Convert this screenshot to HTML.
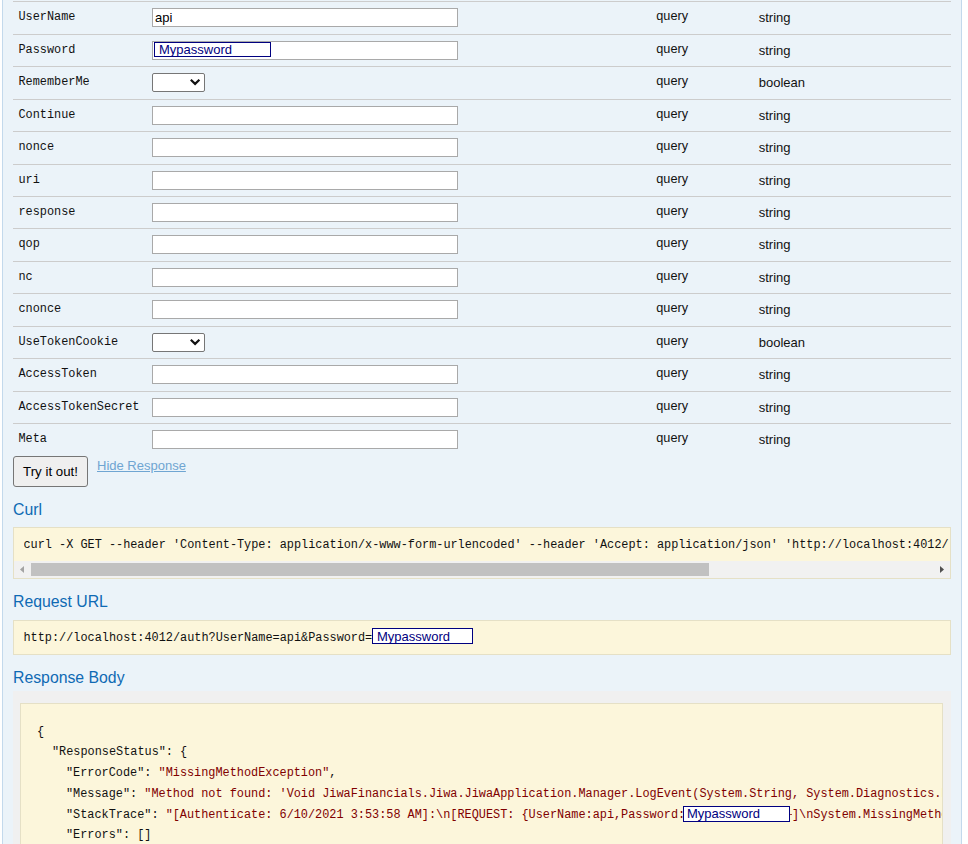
<!DOCTYPE html>
<html><head><meta charset="utf-8"><style>
html,body{margin:0;padding:0;}
body{width:968px;height:844px;overflow:hidden;background:#fff;position:relative;font-family:"Liberation Sans",sans-serif;}
#panel{position:absolute;left:2px;top:-2px;width:958px;height:860px;background:#ebf3f9;border:1px solid #c3d9ec;}
.ln{position:absolute;left:13px;width:938px;height:1px;background:#cccccc;}
.lab{position:absolute;left:18.5px;font:11.87px/14px "Liberation Mono",monospace;color:#111;white-space:pre;}
.inp{position:absolute;left:152px;width:304px;height:17px;border:1px solid #a9a9a9;background:#fff;}
.sel{position:absolute;left:152px;width:51px;height:17px;border:1px solid #767676;border-radius:2px;background:#fff;}
.q{position:absolute;left:656.3px;font-size:12.7px;line-height:15px;color:#111;}
.t{position:absolute;left:758.7px;font-size:13px;line-height:15px;color:#111;}
.h4{position:absolute;left:13px;font-size:15.8px;line-height:20px;color:#0f6ab4;}
.box{position:absolute;left:13px;width:936px;background:#fcf6db;border:1px solid #e5e0c6;}
.mono{position:absolute;font:11.87px/14px "Liberation Mono",monospace;color:#111;white-space:pre;}
.red{color:#800000;}
.pw{position:absolute;border:1px solid #000080;background:#fff;color:#000080;font-size:13px;line-height:14px;overflow:hidden;box-sizing:border-box;white-space:pre;}
</style></head><body>
<div id="panel"></div>

<div class="ln" style="top:1px"></div>
<div class="lab" style="top:10px">UserName</div>
<div class="inp" style="top:8px"></div>
<div class="q" style="top:9px">query</div>
<div class="t" style="top:10px">string</div>
<div class="ln" style="top:34px"></div>
<div class="lab" style="top:43px">Password</div>
<div class="inp" style="top:41px"></div>
<div class="q" style="top:42px">query</div>
<div class="t" style="top:43px">string</div>
<div class="ln" style="top:66px"></div>
<div class="lab" style="top:75px">RememberMe</div>
<div class="sel" style="top:73px"><svg width="12" height="9" viewBox="0 0 12 9" style="position:absolute;left:37px;top:4px"><path d="M0.8 1.8 L5.1 5.9 L9.4 1.8" fill="none" stroke="#111" stroke-width="2.2"/></svg></div>
<div class="q" style="top:74px">query</div>
<div class="t" style="top:75px">boolean</div>
<div class="ln" style="top:99px"></div>
<div class="lab" style="top:108px">Continue</div>
<div class="inp" style="top:106px"></div>
<div class="q" style="top:107px">query</div>
<div class="t" style="top:108px">string</div>
<div class="ln" style="top:131px"></div>
<div class="lab" style="top:140px">nonce</div>
<div class="inp" style="top:138px"></div>
<div class="q" style="top:139px">query</div>
<div class="t" style="top:140px">string</div>
<div class="ln" style="top:164px"></div>
<div class="lab" style="top:173px">uri</div>
<div class="inp" style="top:171px"></div>
<div class="q" style="top:172px">query</div>
<div class="t" style="top:173px">string</div>
<div class="ln" style="top:196px"></div>
<div class="lab" style="top:205px">response</div>
<div class="inp" style="top:203px"></div>
<div class="q" style="top:204px">query</div>
<div class="t" style="top:205px">string</div>
<div class="ln" style="top:228px"></div>
<div class="lab" style="top:237px">qop</div>
<div class="inp" style="top:235px"></div>
<div class="q" style="top:236px">query</div>
<div class="t" style="top:237px">string</div>
<div class="ln" style="top:261px"></div>
<div class="lab" style="top:270px">nc</div>
<div class="inp" style="top:268px"></div>
<div class="q" style="top:269px">query</div>
<div class="t" style="top:270px">string</div>
<div class="ln" style="top:293px"></div>
<div class="lab" style="top:302px">cnonce</div>
<div class="inp" style="top:300px"></div>
<div class="q" style="top:301px">query</div>
<div class="t" style="top:302px">string</div>
<div class="ln" style="top:326px"></div>
<div class="lab" style="top:335px">UseTokenCookie</div>
<div class="sel" style="top:333px"><svg width="12" height="9" viewBox="0 0 12 9" style="position:absolute;left:37px;top:4px"><path d="M0.8 1.8 L5.1 5.9 L9.4 1.8" fill="none" stroke="#111" stroke-width="2.2"/></svg></div>
<div class="q" style="top:334px">query</div>
<div class="t" style="top:335px">boolean</div>
<div class="ln" style="top:358px"></div>
<div class="lab" style="top:367px">AccessToken</div>
<div class="inp" style="top:365px"></div>
<div class="q" style="top:366px">query</div>
<div class="t" style="top:367px">string</div>
<div class="ln" style="top:391px"></div>
<div class="lab" style="top:400px">AccessTokenSecret</div>
<div class="inp" style="top:398px"></div>
<div class="q" style="top:399px">query</div>
<div class="t" style="top:400px">string</div>
<div class="ln" style="top:423px"></div>
<div class="lab" style="top:432px">Meta</div>
<div class="inp" style="top:430px"></div>
<div class="q" style="top:431px">query</div>
<div class="t" style="top:432px">string</div>

<div style="position:absolute;left:155px;top:10px;font-size:13px;line-height:15px;color:#000">api</div>
<div class="pw" style="left:154px;top:42px;width:117px;height:15px;padding-left:4px">Mypassword</div>
<div style="position:absolute;left:13px;top:456px;width:73px;height:29px;border:1px solid #767676;border-radius:3px;background:#efefef;font-size:13.3px;line-height:29px;text-align:center;color:#000">Try it out!</div>
<div style="position:absolute;left:97px;top:458px;font-size:13px;line-height:16px;color:#6fa5d2;text-decoration:underline">Hide Response</div>
<div class="h4" style="top:500px">Curl</div>
<div class="box" style="top:527px;height:50px"></div>
<div class="mono" style="font-size:11.87px;left:23.5px;top:538px;width:925px;overflow:hidden">curl -X GET --header 'Content-Type: application/x-www-form-urlencoded' --header 'Accept: application/json' 'http://localhost:4012/</div>
<div style="position:absolute;left:14px;top:561px;width:936px;height:17px;background:#f1f1f1"></div>
<div style="position:absolute;left:31px;top:563px;width:678px;height:13px;background:#c1c1c1"></div>
<svg style="position:absolute;left:20px;top:566px" width="4" height="7"><path d="M4 0 L0 3.5 L4 7 Z" fill="#a3a3a3"/></svg>
<svg style="position:absolute;left:940px;top:566px" width="4" height="7"><path d="M0 0 L4 3.5 L0 7 Z" fill="#505050"/></svg>
<div class="h4" style="top:592px">Request URL</div>
<div class="box" style="top:620px;height:33px"></div>
<div class="mono" style="left:23.5px;top:631px">http://localhost:4012/auth?UserName=api&amp;Password=</div>
<div class="pw" style="left:372px;top:628px;width:101px;height:16px;padding-left:4px;line-height:16px;overflow:visible">Mypassword</div>
<div class="h4" style="top:668px">Response Body</div>
<div style="position:absolute;left:13px;top:691px;width:938px;height:160px;background:#f0f0f0"></div>
<div style="position:absolute;left:20px;top:703px;width:921px;height:150px;background:#fcf6db;border:1px solid #e5e0c6"></div>
<div class="mono" style="left:37px;top:725px">{</div>
<div class="mono" style="left:52px;top:745px">"ResponseStatus": {</div>
<div class="mono" style="left:66px;top:766px">"ErrorCode": <span class="red">"MissingMethodException"</span>,</div>
<div class="mono" style="left:66px;top:787px;width:876px;overflow:hidden">"Message": <span class="red">"Method not found: 'Void JiwaFinancials.Jiwa.JiwaApplication.Manager.LogEvent(System.String, System.Diagnostics.EventLogEntryType)</span></div>
<div class="mono" style="left:66px;top:808px;width:876px;overflow:hidden">"StackTrace": <span class="red">"[Authenticate: 6/10/2021 3:53:58 AM]:\n[REQUEST: {UserName:api,Password:               ]\nSystem.MissingMethodException</span></div>
<div class="pw" style="left:683px;top:806px;width:107px;height:16px;padding-left:3px;line-height:14px;overflow:visible">Mypassword</div>
<div style="position:absolute;left:790px;top:814px;width:2px;height:1px;background:#a04040"></div>
<div class="mono" style="left:66px;top:828px">"Errors": []</div>
</body></html>
